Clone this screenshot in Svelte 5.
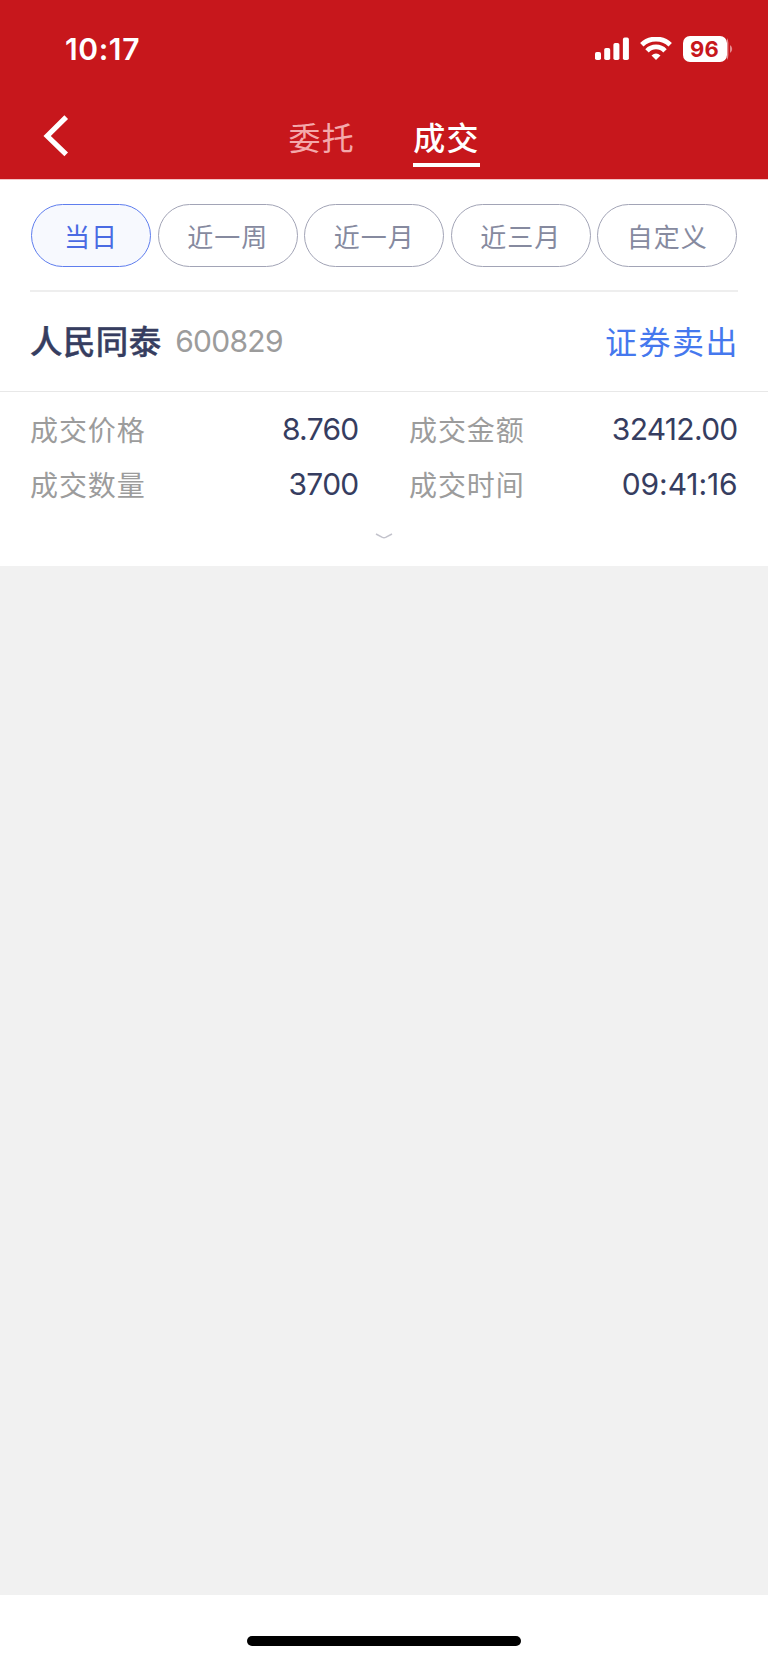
<script>
  const ranges = ['当日', '近一周', '近一月', '近三月', '自定义'];
  let active = $state(0);
  const details = [
    { label: '成交价格', value: '8.760' },
    { label: '成交金额', value: '32412.00' },
    { label: '成交数量', value: '3700' },
    { label: '成交时间', value: '09:41:16', time: true }
  ];
</script>

<div class="screen">
  <header>
    <div class="status">
      <span class="clock">10:17</span>
      <svg class="signal" width="34" height="24" viewBox="0 0 34 24" fill="#fff">
        <rect x="0" y="15" width="6" height="8" rx="1.8" />
        <rect x="9.2" y="11" width="6" height="12" rx="1.8" />
        <rect x="18.4" y="6" width="6" height="17" rx="1.8" />
        <rect x="27.9" y="0.6" width="6" height="22.4" rx="1.8" />
      </svg>
      <svg class="wifi" width="32" height="24" viewBox="0 0 32 24" fill="none" stroke="#fff" stroke-width="4.8">
        <path d="M1.8 7.8A20.3 20.3 0 0 1 30.2 7.8" />
        <path d="M7 13.8A12.4 12.4 0 0 1 25 13.8" />
        <path d="M16 23L11.5 18.4Q16 14.4 20.5 18.4Z" fill="#fff" stroke="none" />
      </svg>
      <div class="battery">96</div>
      <svg class="nub" width="6" height="26" viewBox="0 0 6 26">
        <path d="M0 2Q1.4 4 1.4 7V19Q1.4 22 0 24Z" fill="#e58b8e" />
        <path d="M3 9Q5.2 10.3 5.2 13Q5.2 15.7 3 17Z" fill="#e58b8e" />
      </svg>
    </div>
    <nav>
      <svg class="back" width="26" height="42" viewBox="0 0 26 42" fill="none" stroke="#fff" stroke-width="5.2">
        <path d="M23.2 2.2L4.2 21L23.2 39.4" />
      </svg>
      <span class="tab">委托</span>
      <span class="tab current">成交</span>
    </nav>
  </header>

  <section class="filters">
    {#each ranges as range, i}
      <button class:active={i === active} onclick={() => (active = i)}>{range}</button>
    {/each}
  </section>

  <section class="stock">
    <strong>人民同泰</strong>
    <span class="code">600829</span>
    <span class="side">证券卖出</span>
  </section>

  <section class="details">
    <div class="grid">
      {#each details as d}
        <div class="item">
          <span class="label">{d.label}</span>
          <span class="value" class:time={d.time}>{d.value}</span>
        </div>
      {/each}
    </div>
    <svg class="more" width="18" height="8" viewBox="0 0 18 8" fill="none" stroke="#c3c3cc" stroke-width="1.5">
      <path d="M1 1L7.4 4.4Q9 5.2 10.6 4.4L17 1" />
    </svg>
  </section>

  <main></main>
  <footer><div class="home"></div></footer>
</div>

<style>
  .screen {
    width: 768px;
    height: 1663px;
    display: flex;
    flex-direction: column;
    background: #fff;
    color: #363d60;
    font-family: Inter, "Noto Sans CJK SC", sans-serif;
    overflow: hidden;
  }
  header {
    height: 179px;
    flex: none;
    background: #c7171c;
    color: #fff;
    border-bottom: 1px solid #f3c5c6;
    box-sizing: content-box;
  }
  .status {
    height: 98px;
    display: flex;
    align-items: center;
    padding: 0 35.5px 0 65px;
    box-sizing: border-box;
  }
  .clock {
    font-size: 30px;
    font-weight: 600;
    letter-spacing: 0.6px;
  }
  .signal { margin-left: auto; margin-right: 11px; }
  .wifi { margin-right: 10.5px; }
  .battery {
    width: 44px;
    height: 26px;
    border-radius: 7px;
    background: #fff;
    color: #c7171c;
    font-size: 22px;
    font-weight: 700;
    letter-spacing: 0.2px;
    line-height: 26px;
    text-align: center;
  }
  nav {
    height: 81px;
    display: flex;
    align-items: flex-start;
    padding: 14px 0 0 43px;
    box-sizing: border-box;
  }
  .back { margin: 3px 219.4px 0 0; }
  .tab {
    height: 51px;
    box-sizing: border-box;
    padding-top: 2.6px;
    line-height: 48px;
    font-size: 32px;
    letter-spacing: 1.4px;
    color: #f4a9ab;
    margin-right: 58px;
  }
  .tab.current {
    height: 55px;
    color: #fff;
    font-weight: 500;
    border-bottom: 4px solid #fff;
  }
  .filters {
    flex: none;
    height: 86px;
    margin: 0 30px;
    padding: 24px 1px 0;
    display: flex;
    justify-content: space-between;
    align-items: flex-start;
    border-bottom: 2px solid #eee;
  }
  button {
    width: 139.6px;
    height: 63px;
    box-sizing: border-box;
    padding: 0 0 1px;
    border: 1px solid #a2a4b6;
    border-radius: 32px;
    background: #fff;
    color: #868a9f;
    font: 400 26px Inter, "Noto Sans CJK SC", sans-serif;
    letter-spacing: 1px;
  }
  button.active {
    width: 120px;
    border-color: #5f7eee;
    background: #f7f9fe;
    color: #4a6be3;
  }
  .stock {
    flex: none;
    height: 100px;
    padding: 0 30px 4px;
    box-sizing: border-box;
    display: flex;
    align-items: center;
    border-bottom: 1px solid #e8e8e8;
  }
  .stock strong {
    font-size: 32.4px;
    font-weight: 500;
    letter-spacing: 0.5px;
    -webkit-text-stroke: 0.4px #363d60;
  }
  .code {
    margin: 2px 0 0 13.6px;
    font-size: 30px;
    letter-spacing: -0.7px;
    color: #9c9c9c;
  }
  .side {
    margin-left: auto;
    font-size: 32px;
    letter-spacing: 1.5px;
    margin-right: -1px;
    color: #4578ee;
  }
  .details {
    flex: none;
    height: 174px;
    display: flex;
    flex-direction: column;
    align-items: center;
  }
  .grid {
    width: 708px;
    padding-top: 10px;
    display: grid;
    grid-template-columns: 328px 328px;
    column-gap: 51px;
    grid-auto-rows: 55px;
  }
  .item {
    display: flex;
    justify-content: space-between;
    align-items: center;
  }
  .label {
    font-size: 28px;
    letter-spacing: 0.9px;
    color: #9c9c9c;
    margin-bottom: 2px;
  }
  .value {
    font-size: 30px;
    letter-spacing: -0.7px;
    margin-right: -0.6px;
    margin-bottom: 1px;
  }
  .value.time { letter-spacing: -0.1px; }
  .more { margin-top: 21px; }
  main {
    flex: 1;
    background: #f1f1f1;
  }
  footer {
    flex: none;
    height: 68px;
    display: flex;
    justify-content: center;
    align-items: flex-start;
    padding-top: 41px;
    box-sizing: border-box;
  }
  .home {
    width: 274px;
    height: 10px;
    border-radius: 5px;
    background: #000;
  }
</style>
